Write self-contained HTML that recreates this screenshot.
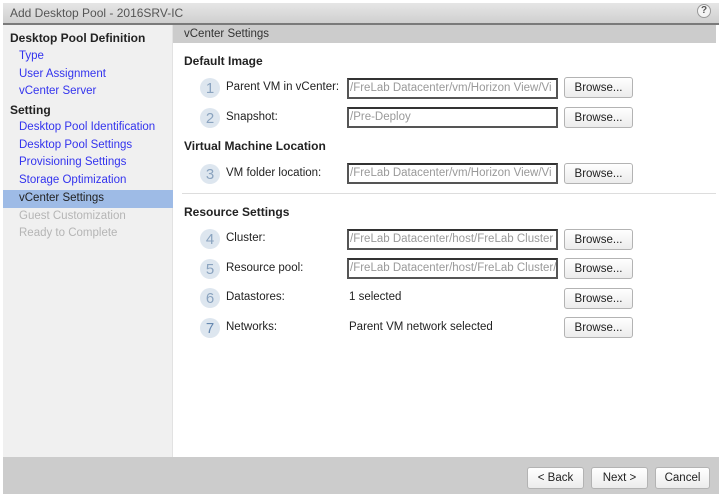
<!DOCTYPE html>
<html><head><meta charset="utf-8"><style>
*{margin:0;padding:0;box-sizing:border-box}
body{width:719px;height:496px;background:#fff;font-family:"Liberation Sans",sans-serif;font-size:11.5px;color:#222;position:relative;overflow:hidden}
.a{position:absolute;white-space:nowrap}
#title{left:3px;top:3px;width:716px;height:22px;background:linear-gradient(#e6e6e6,#cfcfcf);border-bottom:2px solid #7a7a7a}
#side{left:3px;top:25px;width:170px;height:432px;background:#f0f0f0;border-right:1px solid #e2e2e2}
#hdr{left:173px;top:25px;width:543px;height:18px;background:#cccccc}
#foot{left:3px;top:457px;width:716px;height:37px;background:#cccccc}
.lk{color:#3333ee}
.dis{color:#b5b5b5}
.b{font-weight:bold;font-size:12px;color:#222}
.c{width:20px;height:20px;border-radius:50%;background:#dde6ef;color:#8aa3bf;font-size:15px;text-align:center;line-height:21px}
.in{width:211px;height:21px;border:2px solid #555;border-top-color:#333;color:#999;padding-left:1px;line-height:17px;overflow:hidden;font-size:11.5px;background:#fff}
.btn{width:69px;height:21px;border:1px solid #b3b3b3;border-radius:3px;background:linear-gradient(#fff,#ececec);text-align:center;line-height:20px;color:#222}
</style></head><body>
<div class="a" id="title"></div>
<div class="a" style="left:10px;top:6px;color:#555;font-size:12px">Add Desktop Pool - 2016SRV-IC</div>
<div class="a" style="left:697px;top:4px;width:14px;height:14px;border-radius:50%;border:1px solid #999;background:#f4f4f4;font-size:10px;font-weight:bold;text-align:center;line-height:12px;color:#555">?</div>
<div class="a" id="side"></div>
<div class="a" id="hdr"></div>
<div class="a" style="left:184px;top:28px;color:#333">vCenter Settings</div>
<div class="a" id="foot"></div>
<div class="a" style="left:3px;top:190px;width:170px;height:18px;background:#9ebbe6"></div>
<div class="a b" style="left:10px;top:31px">Desktop Pool Definition</div>
<div class="a lk" style="left:19px;top:50px">Type</div>
<div class="a lk" style="left:19px;top:68px">User Assignment</div>
<div class="a lk" style="left:19px;top:85px">vCenter Server</div>
<div class="a b" style="left:10px;top:103px">Setting</div>
<div class="a lk" style="left:19px;top:121px">Desktop Pool Identification</div>
<div class="a lk" style="left:19px;top:139px">Desktop Pool Settings</div>
<div class="a lk" style="left:19px;top:156px">Provisioning Settings</div>
<div class="a lk" style="left:19px;top:174px">Storage Optimization</div>
<div class="a" style="left:19px;top:192px;color:#222">vCenter Settings</div>
<div class="a dis" style="left:19px;top:210px">Guest Customization</div>
<div class="a dis" style="left:19px;top:227px">Ready to Complete</div>

<div class="a b" style="left:184px;top:54px">Default Image</div>
<div class="a c" style="left:200px;top:78px">1</div>
<div class="a" style="left:226px;top:81px">Parent VM in vCenter:</div>
<div class="a in" style="left:347px;top:78px">/FreLab Datacenter/vm/Horizon View/Vi</div>
<div class="a btn" style="left:564px;top:77px">Browse...</div>
<div class="a c" style="left:200px;top:108px">2</div>
<div class="a" style="left:226px;top:111px">Snapshot:</div>
<div class="a in" style="left:347px;top:107px">/Pre-Deploy</div>
<div class="a btn" style="left:564px;top:107px">Browse...</div>
<div class="a b" style="left:184px;top:139px">Virtual Machine Location</div>
<div class="a c" style="left:200px;top:164px">3</div>
<div class="a" style="left:226px;top:167px">VM folder location:</div>
<div class="a in" style="left:347px;top:163px">/FreLab Datacenter/vm/Horizon View/Vi</div>
<div class="a btn" style="left:564px;top:163px">Browse...</div>
<div class="a" style="left:182px;top:193px;width:534px;height:1px;background:#ddd"></div>
<div class="a b" style="left:184px;top:205px">Resource Settings</div>
<div class="a c" style="left:200px;top:229px">4</div>
<div class="a" style="left:226px;top:232px">Cluster:</div>
<div class="a in" style="left:347px;top:229px">/FreLab Datacenter/host/FreLab Cluster</div>
<div class="a btn" style="left:564px;top:229px">Browse...</div>
<div class="a c" style="left:200px;top:259px">5</div>
<div class="a" style="left:226px;top:262px">Resource pool:</div>
<div class="a in" style="left:347px;top:258px">/FreLab Datacenter/host/FreLab Cluster/</div>
<div class="a btn" style="left:564px;top:258px">Browse...</div>
<div class="a c" style="left:200px;top:288px">6</div>
<div class="a" style="left:226px;top:291px">Datastores:</div>
<div class="a" style="left:349px;top:291px">1 selected</div>
<div class="a btn" style="left:564px;top:288px">Browse...</div>
<div class="a c" style="left:200px;top:318px;color:#6688b0">7</div>
<div class="a" style="left:226px;top:321px">Networks:</div>
<div class="a" style="left:349px;top:321px">Parent VM network selected</div>
<div class="a btn" style="left:564px;top:317px">Browse...</div>

<div class="a btn" style="left:527px;top:467px;width:57px;height:22px;line-height:21px">&lt; Back</div>
<div class="a btn" style="left:591px;top:467px;width:57px;height:22px;line-height:21px">Next &gt;</div>
<div class="a btn" style="left:655px;top:467px;width:55px;height:22px;line-height:21px">Cancel</div>
</body></html>
